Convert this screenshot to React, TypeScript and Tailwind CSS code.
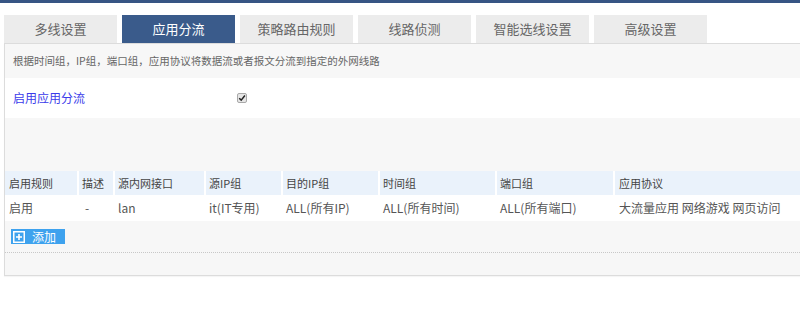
const TABS = ['多线设置', '应用分流', '策略路由规则', '线路侦测', '智能选线设置', '高级设置'];

const COLUMNS = [
    { label: '启用规则', width: 'w-[74px]', pad: 'pl-1' },
    { label: '描述', width: 'w-[36px]', pad: 'pl-[3px]' },
    { label: '源内网接口', width: 'w-[91px]', pad: 'pl-[3px]' },
    { label: '源IP组', width: 'w-[77px]', pad: 'pl-[3px]' },
    { label: '目的IP组', width: 'w-[97px]', pad: 'pl-[3px]' },
    { label: '时间组', width: 'w-[117px]', pad: 'pl-[3px]' },
    { label: '端口组', width: 'w-[118px]', pad: 'pl-[3px]' },
    { label: '应用协议', width: 'flex-1', pad: 'pl-1' },
];

const ROW = [
    '启用',
    '-',
    'lan',
    'it(IT专用)',
    'ALL(所有IP)',
    'ALL(所有时间)',
    'ALL(所有端口)',
    '大流量应用 网络游戏 网页访问',
];

function CheckedBox() {
    return (
        <span className="flex h-[10px] w-[10px] items-center justify-center rounded-[2px] border border-[#a9a9a9] bg-[#e6e6e6]">
            <svg viewBox="0 0 10 10" className="h-[8px] w-[8px]">
                <path d="M1.5 5.2 L4 7.6 L8.6 1.8" fill="none" stroke="#222" strokeWidth="1.8" />
            </svg>
        </span>
    );
}

export default function App() {
    return (
        <div className="h-[322px] w-[800px] overflow-hidden bg-white font-['Noto_Sans_CJK_SC','Liberation_Sans',sans-serif]">
            <div className="h-[3px] bg-[#375584]" />

            <div className="flex gap-[5px] pt-3 pl-1">
                {TABS.map((tab, index) => (
                    <div
                        key={tab}
                        className={`flex h-[28px] w-[113px] items-center justify-center text-[13px] ${
                            index === 1 ? 'bg-[#3a5b8b] text-white' : 'bg-[#ececec] text-[#666]'
                        }`}
                    >
                        {tab}
                    </div>
                ))}
            </div>

            <div className="ml-1 border-t border-b border-l border-[#dcdcdc] bg-[#f7f7f7] shadow-[0_1px_1px_rgba(0,0,0,0.04)]">
                <div className="flex h-[34px] items-center pl-2 text-[10.5px] text-[#666]">
                    根据时间组，IP组，端口组，应用协议将数据流或者报文分流到指定的外网线路
                </div>

                <div className="flex h-[40px] items-center bg-white pl-2 text-[12px] text-[#3b3bea]">
                    <span className="w-[224px]">启用应用分流</span>
                    <CheckedBox />
                </div>

                <div className="h-[53px]" />

                <div className="flex h-[24px] bg-[#eaf2fb] text-[11px] text-[#444]">
                    {COLUMNS.map((col, index) => (
                        <div
                            key={col.label}
                            className={`flex items-center ${col.width} ${col.pad} ${
                                index < COLUMNS.length - 1 ? 'border-r-2 border-white' : ''
                            }`}
                        >
                            {col.label}
                        </div>
                    ))}
                </div>

                <div className="flex h-[26px] bg-white text-[12px] text-[#555]">
                    {COLUMNS.map((col, index) => (
                        <div
                            key={col.label}
                            className={`flex items-center whitespace-nowrap ${col.width} ${col.pad} ${
                                index === 1 ? 'pl-[6px]' : ''
                            }`}
                        >
                            {ROW[index]}
                        </div>
                    ))}
                </div>

                <div className="flex h-[31px] items-start pt-2 pl-[6px]">
                    <button className="flex h-[15px] w-[54px] items-center gap-[7px] bg-[#3ea2ee] pl-[2px] text-[12px] leading-none text-white">
                        <svg viewBox="0 0 12 12" className="h-[12px] w-[12px]">
                            <rect x="0.75" y="0.75" width="10.5" height="10.5" fill="none" stroke="#fff" strokeWidth="1.5" />
                            <path d="M6 3 V9 M3 6 H9" stroke="#fff" strokeWidth="1.6" />
                        </svg>
                        添加
                    </button>
                </div>

                <div className="h-[23px] border-t border-dotted border-[#c8c8c8]" />
            </div>
        </div>
    );
}
